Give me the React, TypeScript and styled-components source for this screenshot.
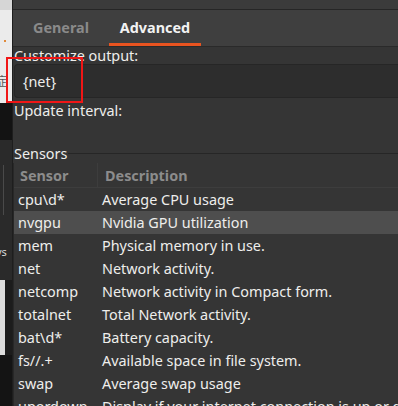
import styled, { createGlobalStyle } from "styled-components";

const GlobalStyle = createGlobalStyle`
  html, body {
    margin: 0;
    padding: 0;
    background: #353535;
    overflow: hidden;
  }
  * {
    box-sizing: border-box;
  }
`;

const Screen = styled.div`
  position: relative;
  display: flex;
  width: 398px;
  height: 406px;
  overflow: hidden;
  font-family: "Noto Sans", "DejaVu Sans", sans-serif;
  font-size: 14.4px;
  color: #eeeeec;
`;

const Desktop = styled.div`
  width: 12px;
  flex-shrink: 0;
  display: flex;
  flex-direction: column;
  overflow: hidden;
`;

const DesktopBlock = styled.div<{ h: number; bg: string }>`
  position: relative;
  height: ${({ h }) => h}px;
  background: ${({ bg }) => bg};
  flex-shrink: 0;
`;

const Dot = styled.span`
  position: absolute;
  left: 4px;
  top: 30px;
  width: 2px;
  height: 2px;
  background: #e08a3a;
`;

const Glyph = styled.span`
  position: absolute;
  left: -5px;
  top: 62px;
  font-size: 12px;
  color: #555;
  font-family: "Noto Sans CJK SC", sans-serif;
`;

const EdgeBar = styled.span`
  position: absolute;
  left: 3px;
  top: 25px;
  width: 1px;
  height: 50px;
  background: #4a4a4a;
`;

const EdgeText = styled.span`
  position: absolute;
  left: -4px;
  top: 104px;
  font-size: 11px;
  color: #d8d8d8;
`;

const LightEdge = styled.span`
  position: absolute;
  left: 0;
  top: 0;
  width: 5px;
  height: 100%;
  background: #dcdcdc;
`;

const Window = styled.div`
  flex: 1;
  display: flex;
  flex-direction: column;
  background: #353535;
  border-left: 1px solid #1e1e1e;
  min-width: 0;
`;

const TitleStrip = styled.div`
  height: 10px;
  background: #3b3b3b;
  border-bottom: 1px solid #262626;
  flex-shrink: 0;
`;

const TabBar = styled.div`
  display: flex;
  height: 37px;
  background: #3f3f3f;
  border-bottom: 1px solid #2a2a2a;
  flex-shrink: 0;
`;

const Tab = styled.div<{ active?: boolean; w: number }>`
  width: ${({ w }) => w}px;
  display: flex;
  align-items: center;
  justify-content: center;
  font-weight: bold;
  font-size: 14.4px;
  padding-top: 2px;
  color: ${({ active }) => (active ? "#f2f2f2" : "#8a8a8a")};
  border-bottom: 3px solid ${({ active }) => (active ? "#e95420" : "transparent")};
`;

const Content = styled.div`
  display: flex;
  flex-direction: column;
  padding-left: 1px;
`;

const Label = styled.div<{ h: number }>`
  height: ${({ h }) => h}px;
  line-height: ${({ h }) => h}px;
  white-space: nowrap;
`;

const Entry = styled.div`
  height: 34px;
  display: flex;
  align-items: center;
  padding-left: 8px;
  background: #2d2d2d;
  border: 1px solid #262626;
  border-right: none;
  border-radius: 4px 0 0 4px;
`;

const FrameHead = styled.div`
  display: flex;
  align-items: center;
  height: 19px;
  margin-top: 20px;
`;

const FrameLine = styled.div`
  flex: 1;
  height: 1px;
  background: #262626;
  margin-left: 1px;
`;

const Table = styled.div`
  margin-left: -1px;
  border-left: 1px solid #282828;
  display: flex;
  flex-direction: column;
`;

const HeaderRow = styled.div`
  display: grid;
  grid-template-columns: 83px 1fr;
  height: 25px;
  border-bottom: 1px solid #3d3d3d;
`;

const HeaderCell = styled.div<{ sep?: boolean }>`
  display: flex;
  align-items: center;
  padding-left: ${({ sep }) => (sep ? 7 : 6)}px;
  font-weight: bold;
  color: #8c8c8c;
  border-left: ${({ sep }) => (sep ? "1px solid #3d3d3d" : "none")};
`;

const Row = styled.div<{ selected?: boolean }>`
  display: grid;
  grid-template-columns: 83px 1fr;
  height: 23px;
  align-items: center;
  white-space: nowrap;
  background: ${({ selected }) => (selected ? "#4e4e4e" : "transparent")};
`;

const Cell = styled.div<{ desc?: boolean }>`
  padding-left: ${({ desc }) => (desc ? 5 : 4)}px;
  overflow: hidden;
`;

const Highlight = styled.div`
  position: absolute;
  left: 6px;
  top: 57px;
  width: 77px;
  height: 46px;
  border: 2px solid #f01616;
  pointer-events: none;
`;

const sensors = [
  ["cpu\\d*", "Average CPU usage"],
  ["nvgpu", "Nvidia GPU utilization"],
  ["mem", "Physical memory in use."],
  ["net", "Network activity."],
  ["netcomp", "Network activity in Compact form."],
  ["totalnet", "Total Network activity."],
  ["bat\\d*", "Battery capacity."],
  ["fs//.+", "Available space in file system."],
  ["swap", "Average swap usage"],
  ["upordown", "Display if your internet connection is up or down"],
];

export default function App() {
  return (
    <>
      <GlobalStyle />
      <Screen>
        <Desktop>
          <DesktopBlock h={10} bg="#d6d6d6" />
          <DesktopBlock h={93} bg="#ebebeb">
            <Dot />
            <Glyph>症</Glyph>
          </DesktopBlock>
          <DesktopBlock h={37} bg="#131313" />
          <DesktopBlock h={140} bg="#2a2a2a">
            <EdgeBar />
            <EdgeText>ys</EdgeText>
          </DesktopBlock>
          <DesktopBlock h={75} bg="#1c1c1c">
            <LightEdge />
          </DesktopBlock>
          <DesktopBlock h={51} bg="#141414" />
        </Desktop>
        <Window>
          <TitleStrip />
          <TabBar>
            <Tab w={96}>General</Tab>
            <Tab w={92} active>
              Advanced
            </Tab>
          </TabBar>
          <Content>
            <Label h={17}>Customize output:</Label>
            <Entry>{"{net}"}</Entry>
            <Label h={26}>Update interval:</Label>
            <FrameHead>
              Sensors
              <FrameLine />
            </FrameHead>
            <Table>
              <HeaderRow>
                <HeaderCell>Sensor</HeaderCell>
                <HeaderCell sep>Description</HeaderCell>
              </HeaderRow>
              {sensors.map(([name, desc], i) => (
                <Row key={name} selected={i === 1}>
                  <Cell>{name}</Cell>
                  <Cell desc>{desc}</Cell>
                </Row>
              ))}
            </Table>
          </Content>
        </Window>
        <Highlight />
      </Screen>
    </>
  );
}
